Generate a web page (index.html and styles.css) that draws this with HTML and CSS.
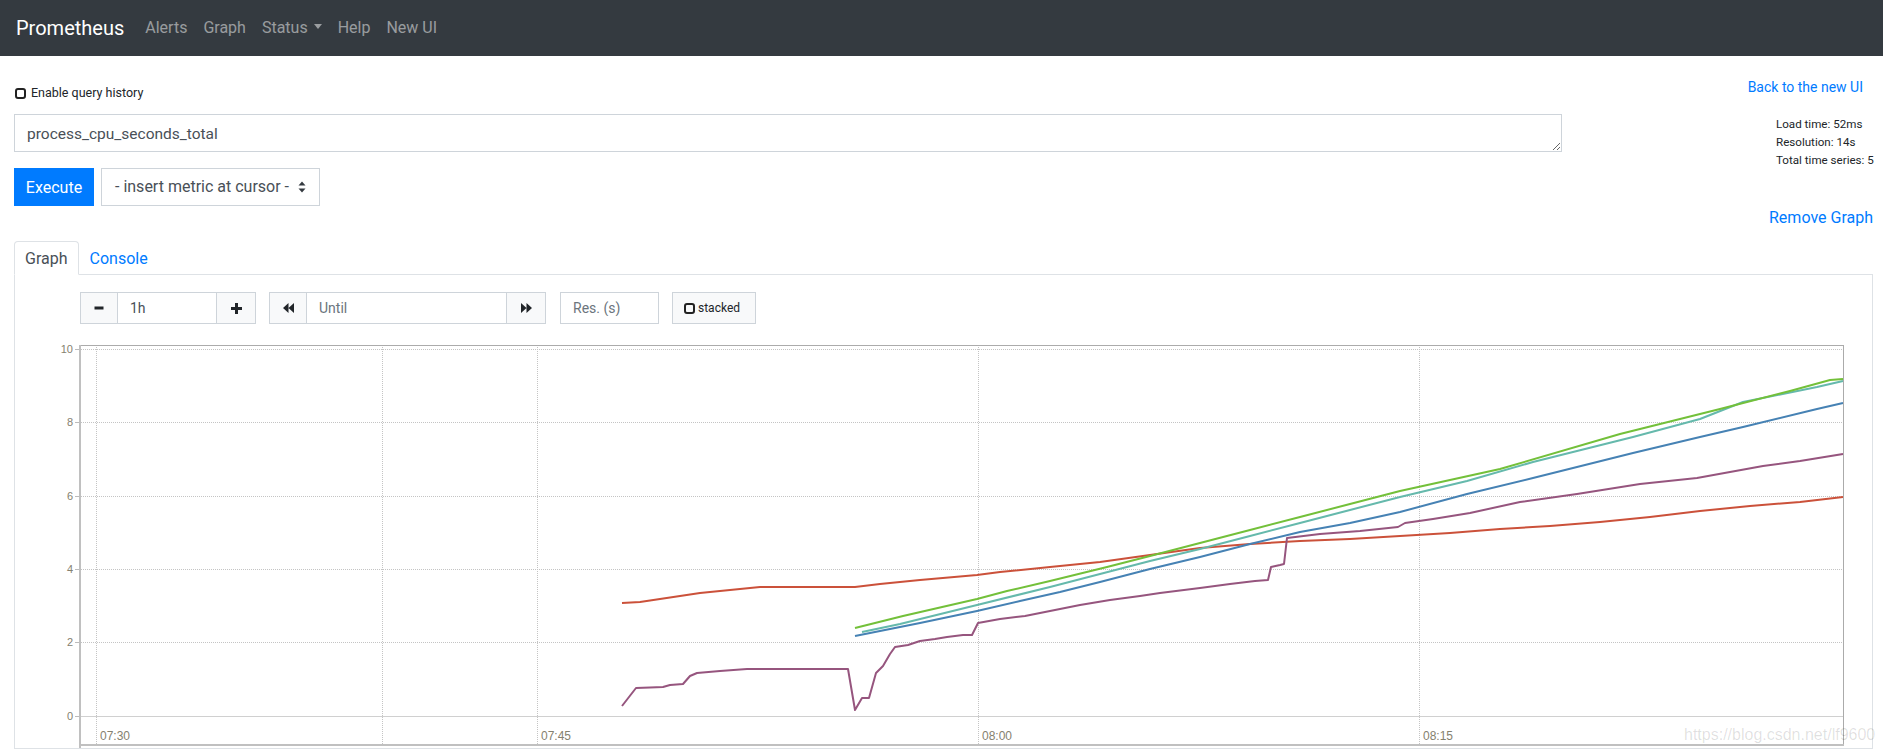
FILE: index.html
```html
<!DOCTYPE html>
<html lang="en">
<head>
<meta charset="utf-8">
<title>Prometheus Time Series Collection and Processing Server</title>
<link rel="stylesheet" href="styles.css">
</head>
<body>
<nav class="navbar">
  <a class="brand" href="#">Prometheus</a>
  <ul class="nav">
    <li><a href="#">Alerts</a></li>
    <li><a href="#">Graph</a></li>
    <li><a href="#">Status<span class="caret"></span></a></li>
    <li><a href="#">Help</a></li>
    <li><a href="#">New UI</a></li>
  </ul>
</nav>

<main class="page">
  <div class="top-row">
    <label class="history"><span class="cb"></span>Enable query history</label>
    <a class="back-link" href="#">Back to the new UI</a>
  </div>

  <div class="query-row">
    <div class="query-col">
      <textarea class="expr" rows="1">process_cpu_seconds_total</textarea>
      <div class="exec-row">
        <button class="btn-exec">Execute</button>
        <div class="metric-select">
          <span>- insert metric at cursor -</span>
          <svg class="updown" width="8" height="12" viewBox="0 0 8 12"><path d="M4 0.5 L7.5 4.5 H0.5 Z M4 11.5 L7.5 7.5 H0.5 Z" fill="#343a40"/></svg>
        </div>
      </div>
    </div>
    <div class="stats">
      <div>Load time: 52ms</div>
      <div>Resolution: 14s</div>
      <div>Total time series: 5</div>
    </div>
  </div>

  <div class="remove-row"><a href="#">Remove Graph</a></div>

  <div class="tabs">
    <a class="tab active" href="#">Graph</a>
    <a class="tab" href="#">Console</a>
  </div>

  <div class="tab-content">
    <div class="controls">
      <div class="input-group">
        <button class="btn-ctl"><svg width="10" height="10" viewBox="0 0 10 10"><rect x="0.5" y="3.5" width="9" height="3" fill="#212529"/></svg></button>
        <input class="ctl-input w-range" value="1h">
        <button class="btn-ctl"><svg width="11" height="11" viewBox="0 0 11 11"><path d="M4 0 H7 V4 H11 V7 H7 V11 H4 V7 H0 V4 H4 Z" fill="#212529"/></svg></button>
      </div>
      <div class="input-group">
        <button class="btn-ctl"><svg width="11" height="10" viewBox="0 0 11 10"><path d="M5.5 0 V10 L0 5 Z M11 0 V10 L5.5 5 Z" fill="#212529"/></svg></button>
        <input class="ctl-input w-until" placeholder="Until">
        <button class="btn-ctl"><svg width="11" height="10" viewBox="0 0 11 10"><path d="M0 0 V10 L5.5 5 Z M5.5 0 V10 L11 5 Z" fill="#212529"/></svg></button>
      </div>
      <input class="ctl-input w-res" placeholder="Res. (s)">
      <button class="btn-stacked"><span class="cb"></span>stacked</button>
    </div>

    <svg class="chart" width="1810" height="409" viewBox="40 340 1810 409">
      <g class="vgrid">
        <line x1="96.5" y1="346" x2="96.5" y2="746"/>
        <line x1="382.5" y1="346" x2="382.5" y2="746"/>
        <line x1="537.5" y1="346" x2="537.5" y2="746"/>
        <line x1="978.5" y1="346" x2="978.5" y2="746"/>
        <line x1="1419.5" y1="346" x2="1419.5" y2="746"/>
      </g>
      <g class="hgrid">
        <line x1="81" y1="350.5" x2="1843" y2="350.5"/>
        <line x1="81" y1="423.5" x2="1843" y2="423.5"/>
        <line x1="81" y1="497.5" x2="1843" y2="497.5"/>
        <line x1="81" y1="570.5" x2="1843" y2="570.5"/>
        <line x1="81" y1="643.5" x2="1843" y2="643.5"/>
      </g>
      <line class="zero" x1="81" y1="717.5" x2="1843" y2="717.5"/>
      <g class="yticks">
        <line x1="75" y1="350.5" x2="80" y2="350.5"/>
        <line x1="75" y1="423.5" x2="80" y2="423.5"/>
        <line x1="75" y1="497.5" x2="80" y2="497.5"/>
        <line x1="75" y1="570.5" x2="80" y2="570.5"/>
        <line x1="75" y1="643.5" x2="80" y2="643.5"/>
        <line x1="75" y1="717.5" x2="80" y2="717.5"/>
      </g>
      <g class="ylabels">
        <text x="73" y="354">10</text>
        <text x="73" y="427">8</text>
        <text x="73" y="501">6</text>
        <text x="73" y="574">4</text>
        <text x="73" y="647">2</text>
        <text x="73" y="721">0</text>
      </g>
      <g class="xlabels">
        <text x="100" y="741">07:30</text>
        <text x="541" y="741">07:45</text>
        <text x="982" y="741">08:00</text>
        <text x="1423" y="741">08:15</text>
      </g>

      <polyline class="s s-red" points="622,604 640,603 660,600 680,597 700,594 720,592 740,590 760,588 855,588 880,585 920,581 977,576 1000,573 1050,568 1100,563 1150,556 1200,549 1250,545 1300,542 1350,540 1400,537 1450,534 1500,530 1550,527 1600,523 1650,518 1700,512 1750,507 1800,503 1843,498"/>
      <polyline class="s s-purple" points="622,707 636,689 650,688.5 663,688 670,686 683,685 690,677 697,674 720,672 747,670 848,670 855,711 862,699 869,699 876,674 883,667 890,655 895,648 908,646 920,642 935,640 947,638 963,636 972,636 978,624 1000,620 1025,617 1050,612 1080,606 1110,601 1140,597 1160,594 1200,589 1230,585 1255,582 1268,581 1271,568 1280,566 1284,565 1287,539 1320,535 1360,532 1398,528 1405,524 1433,520 1470,514 1520,503 1577,495 1640,485 1697,479 1763,467 1800,462 1843,455"/>
      <polyline class="s s-blue" points="855,637 880,632 920,624 977,612 1020,602 1060,593 1100,583 1150,570 1200,558 1250,545 1300,533 1350,524 1400,513 1467,495 1533,479 1633,454 1700,438 1743,428 1817,410 1843,404"/>
      <polyline class="s s-teal" points="862,633 900,625 977,606 1050,588 1100,575 1150,562 1200,550 1250,537 1300,524 1350,511 1400,498 1467,482 1533,463 1633,438 1700,420 1743,403 1817,388 1843,382"/>
      <polyline class="s s-green" points="855,629 903,617 977,600 1007,592 1050,582 1107,568 1150,557 1200,544 1250,531 1300,518 1350,505 1400,492 1500,470 1620,435 1720,410 1790,392 1830,381 1843,380"/>

      <line class="frame-thin" x1="80" y1="346.5" x2="1843" y2="346.5"/>
      <line class="frame-thin" x1="1843.5" y1="346" x2="1843.5" y2="746"/>
      <line class="frame-thick" x1="79" y1="746" x2="1844" y2="746"/>
      <line class="frame-thick" x1="80" y1="346" x2="80" y2="749"/>
    </svg>
  </div>
</main>
<div class="watermark">https://blog.csdn.net/lf9600</div>
</body>
</html>
```

FILE: styles.css
```css
* { box-sizing: border-box; }

html, body {
  margin: 0;
  height: 749px;
  overflow: hidden;
}

body {
  font-family: Roboto, "Noto Sans", "Liberation Sans", sans-serif;
  font-size: 16px;
  line-height: 1.5;
  color: #212529;
  background: #fff;
}

a { text-decoration: none; }

/* ---------- navbar ---------- */
.navbar {
  display: flex;
  align-items: center;
  height: 56px;
  padding: 0 16px;
  background: #343a40;
}

.brand {
  color: #fff;
  font-size: 20px;
  line-height: 30px;
  margin-right: 13px;
}

.nav {
  display: flex;
  list-style: none;
  margin: 0;
  padding: 0;
}

.nav a {
  display: block;
  padding: 0 8px;
  color: rgba(255, 255, 255, 0.5);
}

.caret {
  display: inline-block;
  margin-left: 6px;
  vertical-align: 4px;
  border-top: 5px solid;
  border-left: 4.5px solid transparent;
  border-right: 4.5px solid transparent;
}

/* ---------- page ---------- */
.page {
  padding: 0 10px 0 14px;
}

.top-row {
  display: flex;
  justify-content: space-between;
  align-items: flex-start;
  height: 58px;
  padding-top: 21px;
}

.history {
  display: flex;
  align-items: center;
  margin-top: 6px;
  font-size: 12.5px;
  line-height: 20px;
  color: #212529;
}

.cb {
  display: inline-block;
  width: 11px;
  height: 11px;
  border: 2px solid #222;
  border-radius: 3px;
  margin: 0 5px 0 1px;
}

.back-link {
  margin-right: 10px;
  font-size: 14px;
  line-height: 20px;
  color: #007bff;
}

.query-row {
  display: flex;
  align-items: flex-start;
}

.query-col {
  width: 1548px;
}

.expr {
  display: block;
  width: 100%;
  height: 38px;
  margin: 0;
  padding: 7px 12px 5px;
  font-family: Roboto, "Noto Sans", "Liberation Sans", sans-serif;
  font-size: 15.5px;
  line-height: 24px;
  color: #495057;
  border: 1px solid #ced4da;
  border-radius: 0;
  resize: vertical;
  overflow: hidden;
}

.exec-row {
  display: flex;
  gap: 7px;
  margin-top: 16px;
}

.btn-exec {
  height: 38px;
  width: 80px;
  padding: 0;
  border: 1px solid #007bff;
  background: #007bff;
  color: #fff;
  font-family: inherit;
  font-size: 16px;
  border-radius: 0;
}

.metric-select {
  display: flex;
  align-items: center;
  gap: 9px;
  width: 219px;
  height: 38px;
  padding: 0 12px 0 13px;
  border: 1px solid #ced4da;
  color: #495057;
  font-size: 16px;
}

.stats {
  margin-left: auto;
  width: 97px;
  padding-top: 1px;
  font-size: 11.6px;
  line-height: 18px;
  white-space: nowrap;
  color: #212529;
}

.remove-row {
  text-align: right;
  line-height: 24px;
  margin-bottom: 11px;
}

.remove-row a {
  color: #007bff;
}

/* ---------- tabs ---------- */
.tabs {
  display: flex;
  height: 34px;
  border-bottom: 1px solid #dee2e6;
}

.tab {
  display: block;
  height: 34px;
  padding: 5px 10px 0;
  color: #007bff;
  border: 1px solid transparent;
  border-top-left-radius: 4px;
  border-top-right-radius: 4px;
}

.tab.active {
  color: #495057;
  background: #fff;
  border-color: #dee2e6 #dee2e6 #fff;
}

.tab-content {
  border: 1px solid #dee2e6;
  border-top: 0;
  padding: 17px 0 0 0;
}

.controls {
  display: flex;
  align-items: center;
  gap: 13px;
  height: 32px;
  margin-left: 65px;
}

.input-group {
  display: flex;
  height: 32px;
}

.input-group > * + * {
  margin-left: -1px;
}

.btn-ctl {
  display: flex;
  align-items: center;
  justify-content: center;
  width: 38px;
  height: 32px;
  padding: 0;
  background: #f8f9fa;
  border: 1px solid #ced4da;
  border-radius: 0;
}

.btn-ctl + .ctl-input + .btn-ctl {
  width: 40px;
}

.ctl-input {
  height: 32px;
  padding: 0 12px;
  border: 1px solid #ced4da;
  border-radius: 0;
  font-family: inherit;
  font-size: 14px;
  color: #495057;
  background: #fff;
  outline: none;
}

.ctl-input::placeholder {
  color: #6c757d;
}

.w-range { width: 100px; }
.w-until { width: 201px; }
.w-res { width: 99px; margin-left: 1px; }

.btn-stacked {
  display: flex;
  align-items: center;
  width: 84px;
  height: 32px;
  padding: 0 0 0 11px;
  background: #f8f9fa;
  border: 1px solid #ced4da;
  border-radius: 0;
  font-family: inherit;
  font-size: 12px;
  color: #212529;
}

.btn-stacked .cb {
  margin: 0 3px 0 0;
}

/* ---------- chart ---------- */
.chart {
  display: block;
  margin: 15px 0 0 25px;
  font-family: "Liberation Sans", Arial, sans-serif;
}

.vgrid line,
.hgrid line {
  stroke: #c4c4c4;
  stroke-width: 1;
  stroke-dasharray: 1 1;
}

.zero {
  stroke: #d0d0d0;
  stroke-width: 1;
}

.yticks line {
  stroke: #bbb;
  stroke-width: 1;
}

.ylabels text {
  font-size: 11px;
  fill: #85816f;
  text-anchor: end;
}

.xlabels text {
  font-size: 12px;
  fill: #85816f;
}

.s {
  fill: none;
  stroke-width: 2;
  stroke-linejoin: round;
}

.s-red { stroke: #cb513a; }
.s-purple { stroke: #96557e; }
.s-blue { stroke: #4682b4; }
.s-teal { stroke: #65b9ac; }
.s-green { stroke: #73c03a; }

.frame-thin {
  stroke: #ababab;
  stroke-width: 1;
}

.frame-thick {
  stroke: #c0c0c0;
  stroke-width: 2;
}

/* overlay watermark from the original screenshot */
.watermark {
  position: absolute;
  left: 1684px;
  top: 726px;
  font-family: "Liberation Sans", Arial, sans-serif;
  font-size: 16px;
  line-height: 18px;
  color: rgba(0, 0, 0, 0.13);
  white-space: nowrap;
  pointer-events: none;
}
```
